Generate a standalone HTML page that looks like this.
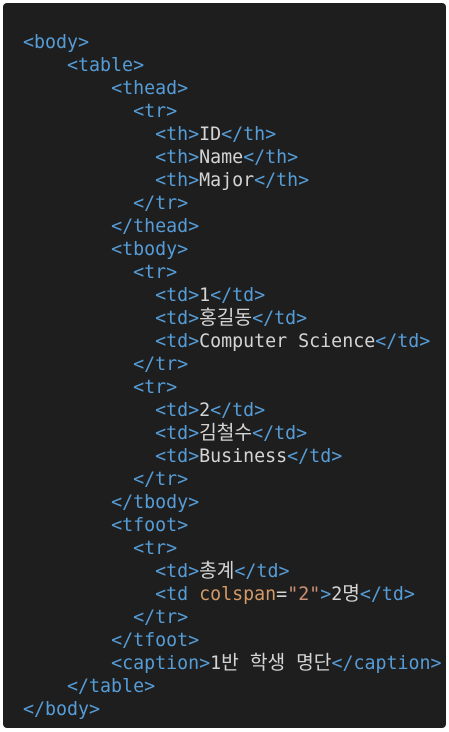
<!DOCTYPE html>
<html><head><meta charset="utf-8"><style>
html,body{margin:0;padding:0;background:#fff;width:449px;height:732px;overflow:hidden}
.box{position:absolute;left:3px;top:3px;width:443px;height:725px;background:#1e1e1e;border-radius:4px}
pre{position:absolute;left:23px;top:31px;margin:0;font-family:"DejaVu Sans Mono","Liberation Mono","Noto Sans CJK KR",monospace;font-size:18.3px;line-height:23px;color:#d4d4d4}
.t{color:#569cd6}.a{color:#d19a66}.s{color:#ce9178}
.k{font-family:"Noto Sans CJK KR","NanumGothic",sans-serif;font-size:19.2px;line-height:0}
</style></head><body><div class="box"></div>
<pre><span class="t">&lt;body&gt;</span>
    <span class="t">&lt;table&gt;</span>
        <span class="t">&lt;thead&gt;</span>
          <span class="t">&lt;tr&gt;</span>
            <span class="t">&lt;th&gt;</span>ID<span class="t">&lt;/th&gt;</span>
            <span class="t">&lt;th&gt;</span>Name<span class="t">&lt;/th&gt;</span>
            <span class="t">&lt;th&gt;</span>Major<span class="t">&lt;/th&gt;</span>
          <span class="t">&lt;/tr&gt;</span>
        <span class="t">&lt;/thead&gt;</span>
        <span class="t">&lt;tbody&gt;</span>
          <span class="t">&lt;tr&gt;</span>
            <span class="t">&lt;td&gt;</span>1<span class="t">&lt;/td&gt;</span>
            <span class="t">&lt;td&gt;</span><span class="k">홍길동</span><span class="t">&lt;/td&gt;</span>
            <span class="t">&lt;td&gt;</span>Computer Science<span class="t">&lt;/td&gt;</span>
          <span class="t">&lt;/tr&gt;</span>
          <span class="t">&lt;tr&gt;</span>
            <span class="t">&lt;td&gt;</span>2<span class="t">&lt;/td&gt;</span>
            <span class="t">&lt;td&gt;</span><span class="k">김철수</span><span class="t">&lt;/td&gt;</span>
            <span class="t">&lt;td&gt;</span>Business<span class="t">&lt;/td&gt;</span>
          <span class="t">&lt;/tr&gt;</span>
        <span class="t">&lt;/tbody&gt;</span>
        <span class="t">&lt;tfoot&gt;</span>
          <span class="t">&lt;tr&gt;</span>
            <span class="t">&lt;td&gt;</span><span class="k">총계</span><span class="t">&lt;/td&gt;</span>
            <span class="t">&lt;td</span> <span class="a">colspan</span>=<span class="s">"2"</span><span class="t">&gt;</span>2<span class="k">명</span><span class="t">&lt;/td&gt;</span>
          <span class="t">&lt;/tr&gt;</span>
        <span class="t">&lt;/tfoot&gt;</span>
        <span class="t">&lt;caption&gt;</span>1<span class="k">반</span> <span class="k">학생</span> <span class="k">명단</span><span class="t">&lt;/caption&gt;</span>
    <span class="t">&lt;/table&gt;</span>
<span class="t">&lt;/body&gt;</span></pre>
</body></html>
